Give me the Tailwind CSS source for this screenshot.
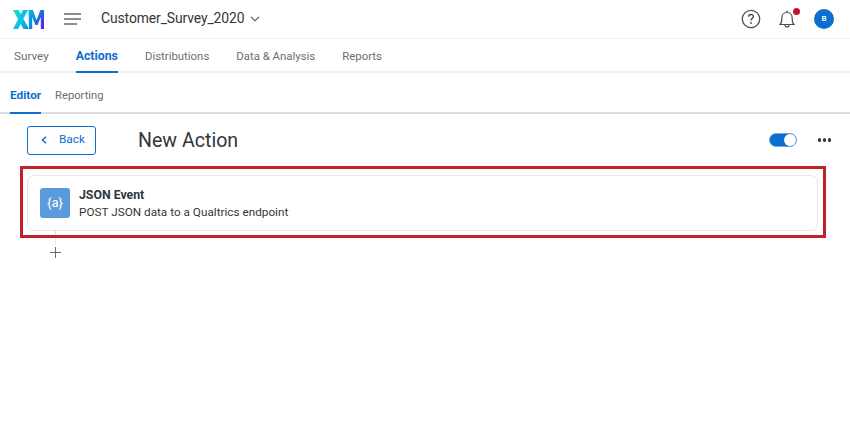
<!DOCTYPE html>
<html><head><script src="https://cdn.jsdelivr.net/npm/@tailwindcss/browser@4"></script></head>
<body class="bg-white">
<div class="w-[850px] h-[425px] overflow-hidden font-['Roboto',sans-serif] text-[#32363a] relative">
  <header class="h-[39px] flex items-center border-b border-[#f0f0f0]">
    <svg class="ml-[13px]" width="31" height="19" viewBox="0 0 31 19"><defs><linearGradient id="g" gradientUnits="userSpaceOnUse" x1="0" y1="2" x2="30" y2="17"><stop offset="0" stop-color="#22e0a8"/><stop offset=".35" stop-color="#08c0ee"/><stop offset=".65" stop-color="#0a8ce4"/><stop offset="1" stop-color="#5a22e6"/></linearGradient></defs><path fill="url(#g)" d="M0 0h5.500L16 19h-5.600zM10 0h5L5 19H0zM15.500 0h4.300l3.800 10.300L27.400 0H31v19h-3.200V7L24.600 15h-2.200L19.200 7V19H16z"/></svg>
    <svg class="ml-[20px]" width="17" height="12" viewBox="0 0 17 12" stroke="#666a6e" stroke-width="1.500"><path d="M0 1h17M0 6h17M0 11h13"/></svg>
    <span class="ml-[20px] text-[13.900px] tracking-[-0.1px] leading-none">Customer_Survey_2020</span>
    <svg class="ml-[6px]" width="10" height="6" viewBox="0 0 10 6" fill="none" stroke="#4b4f54" stroke-width="1.100"><path d="M1 .8l4 4 4-4"/></svg>
    <div class="ml-auto flex items-center">
      <svg width="20" height="20" viewBox="0 0 20 20" fill="none" stroke="#4b4f54" stroke-width="1.300"><circle cx="10" cy="10" r="8.700"/><path d="M7.600 7.800c0-3 4.800-3 4.800-.2 0 1.800-2.400 1.800-2.400 3.800" stroke-width="1.400"/><circle cx="10" cy="14" r=".9" fill="#4b4f54" stroke="none"/></svg>
      <div class="relative ml-[18px] w-[16px] h-[20px]">
        <svg width="16" height="20" viewBox="0 0 16 20" fill="none" stroke="#4b4f54" stroke-width="1.200"><path d="M1 15.500c2-1.500 1.800-4 1.800-6.500 0-3 2-5.500 5.200-5.500s5.200 2.500 5.200 5.500c0 2.500-.2 5 1.800 6.500zM6 16c0 2.600 4 2.600 4 0M8 1.500v2"/></svg>
        <span class="absolute -top-[1px] left-[14px] w-[7px] h-[7px] rounded-full bg-[#c8102e]"></span>
      </div>
      <span class="ml-[19px] mr-[16px] w-[20px] h-[20px] rounded-full bg-[#0b6ed0] text-white text-[8px] font-semibold flex items-center justify-center">B</span>
    </div>
  </header>
  <nav class="h-[34px] flex items-stretch pl-[14px] border-b-2 border-[#f0f0f0] text-[11.400px] text-[#6a6f75]">
    <span class="pt-[9px] text-[11.700px]">Survey</span>
    <span class="ml-[27px] pt-[8px] h-[34px] text-[12.300px] font-bold text-[#0b6ed0] border-b-2 border-[#0b6ed0]">Actions</span>
    <span class="ml-[27px] pt-[9px]">Distributions</span>
    <span class="ml-[27px] pt-[9px]">Data &amp; Analysis</span>
    <span class="ml-[27px] pt-[9px]">Reports</span>
  </nav>
  <nav class="h-[41px] flex items-stretch gap-[14px] pl-[10px] border-b-2 border-[#dcdcdc] text-[11.200px] text-[#6a6f75]">
    <span class="pt-[14px] h-[41px] text-[11.800px] font-bold text-[#0b6ed0] border-b-2 border-[#0b6ed0]">Editor</span>
    <span class="pt-[15px]">Reporting</span>
  </nav>
  <div class="h-[52px] flex items-center pl-[27px] pr-[19px]">
    <button class="w-[69px] h-[29px] flex items-center border border-[#0b6ed0] rounded-[3px] text-[#0b6ed0] text-[11.800px]">
      <svg class="ml-[13px]" width="6" height="8" viewBox="0 0 6 8" fill="none" stroke="#0b6ed0" stroke-width="1.500"><path d="M5 .8L1.500 4 5 7.200"/></svg>
      <span class="ml-[12px]">Back</span>
    </button>
    <h1 class="ml-[42px] mt-[1px] text-[19.600px] leading-none">New Action</h1>
    <div class="ml-auto flex items-center gap-[21px]">
      <div class="w-[28px] h-[14px] rounded-full bg-[#0b6ed0] border border-[#6aa8e6] flex justify-end items-center">
        <span class="w-[12px] h-[12px] rounded-full bg-white"></span>
      </div>
      <div class="flex gap-[1.500px]">
        <span class="w-[3.500px] h-[3.500px] rounded-full bg-[#32363a]"></span>
        <span class="w-[3.500px] h-[3.500px] rounded-full bg-[#32363a]"></span>
        <span class="w-[3.500px] h-[3.500px] rounded-full bg-[#32363a]"></span>
      </div>
    </div>
  </div>
  <section class="relative ml-[20px] w-[806px] h-[72px] border-[3px] border-[#c1202f] pl-[4px] pt-[6px]">
    <div class="w-[791px] h-[56px] rounded-[7px] border border-[#e6e6e6] flex items-center pl-[12px]">
      <div class="w-[30px] h-[30px] rounded-[3px] bg-[#5a9bdc] text-white text-[13px] flex items-center justify-center">{a}</div>
      <div class="ml-[9px] mt-[1px] leading-[17px]">
        <div class="font-bold text-[12.300px]">JSON Event</div>
        <div class="text-[11.750px]">POST JSON data to a Qualtrics endpoint</div>
      </div>
    </div>
    <div class="absolute left-[32px] top-[62px] w-px h-[4px] bg-[#dcdcdc]"></div>
  </section>
  <div class="ml-[55px] w-px h-[7px] bg-[#e6e6e6]"></div>
  <svg class="ml-[50px] mt-[2px]" width="11" height="11" viewBox="0 0 11 11" stroke="#6a6f75" stroke-width="1"><path d="M5.500 0v11M0 5.500h11"/></svg>
</div>
</body></html>
